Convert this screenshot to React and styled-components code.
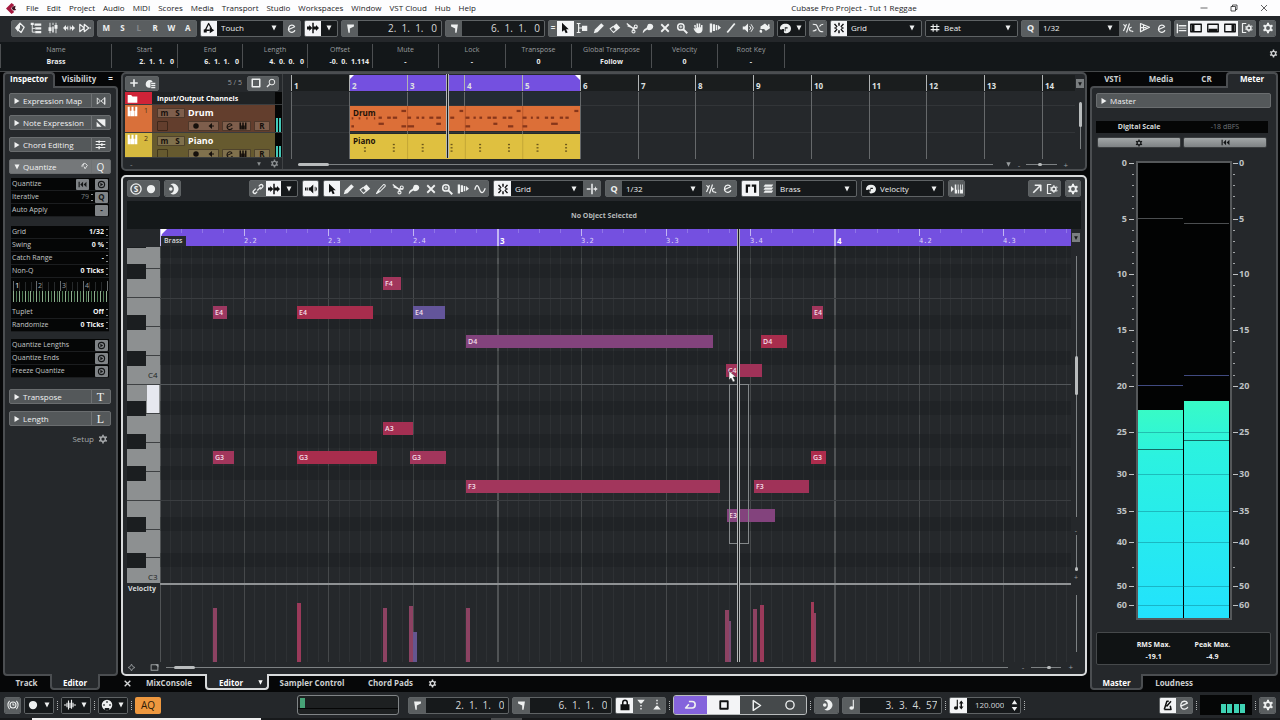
import React from "react";
import styled, { createGlobalStyle, css } from "styled-components";

const GlobalStyle = createGlobalStyle`
  *, *::before, *::after { box-sizing: border-box; }
  body { margin: 0; background: #060708; }
  body, button, input, select {
    font-family: "Open Sans", "Noto Sans", sans-serif;
    font-size: 8px;
    line-height: 10px;
    color: #d6d8d9;
  }
  button, input, select {
    margin: 0; padding: 0; border: 0; background: none; min-width: 0;
    appearance: none; border-radius: 0; outline: none;
  }
  h2, p, dl, dd, dt, ul { margin: 0; padding: 0; font-size: inherit; font-weight: inherit; }
`;

/* ---------- icons ---------- */

const line = (d, w = 1.6) => (
  <path d={d} fill="none" stroke="currentColor" strokeWidth={w} strokeLinejoin="round" />
);

const glyphs = {
  down: <path d="M3 3h10L8 13z" />,
  right: <path d="M3 2v12l10-6z" />,
  updown: <path d="M8 0l4 6H4zM8 16l4-6H4z" />,
  constrain: <>{line("M8 1.500 13.500 7 9.500 14 2.500 8z", 1.8)}<path d="M8 1.500 2 8l3 5 3-5z" /></>,
  tree: <><path d="M1 1h4v3H1zM6 2h9v3H6zM7 7h8v3H7zM7 12h8v3H7z" />{line("M3 3v10.500h4M3 8.500h4", 1.2)}</>,
  faders: <>{line("M4 1v14M8 1v3M12 1v14", 1.2)}<path d="M2 7h4v5H2zM10 4h4v5h-4zM7 6h2v8H7z" /></>,
  span: <path d="M0 8l4-4v3h2V5h1v6H6V9H4v3zM16 8l-4-4v3h-2V5H9v6h1V9h2v3z" />,
  skip: <>{line("M1 3l6 5-6 5zM7 3l6 5-6 5zM14 8h2", 1.5)}</>,
  touch: <>{line("M3 11 7.500 2l4 7M2 11h7", 1.7)}<path d="M9 7l6 4-6 4zM1 10h4v4H1z" /></>,
  edit: <>{line("M4 9.500 12.500 5.500C11 2 5.500 2 4 6.500S5.500 14 9 13.500 13 10.500 13 10.500", 1.8)}</>,
  autoscroll: <><path d="M7 1h2v14H7zM0 6h3V4l4 4-4 4v-2H0zM9 6h3V4l4 4-4 4v-2H9z" /></>,
  flagL: <path d="M3 2h10v3L7 8v6H5z" />,
  flagR: <path d="M13 2H3v3l6 3v6h2z" />,
  pointer: <path d="M4 1v12l3-2.500 2 4.500 2.500-1-2-4.500H13z" />,
  range: <>{line("M1 2h5M1 14h5M3.500 2v12M8 8h-4", 1.6)}<path d="M8 5h7v7H8z" /></>,
  pencil: <path d="M1 15l1.500-5L11 1.500 14.500 5 6 13.500z" />,
  eraser: <>{line("M5.500 6 1.500 9 6 14l4-3.500", 1.4)}<path d="M5 6l5-4 5 5.500-5 4z" /></>,
  scissors: <>{line("M1 2l8 6h6M2 5l7 3 2 4", 1.7)}<circle cx="13" cy="6" r="2" fill="none" stroke="currentColor" strokeWidth="1.500" /><circle cx="10" cy="12.500" r="2" fill="none" stroke="currentColor" strokeWidth="1.500" /></>,
  glue: <path d="M1 15c0-4 2-6 5-7l2-5c3-2 7 0 7 3 0 3-3 5-6 5l-2-1c-2 1-4 3-6 5z" />,
  cross: line("M3 3l10 10M13 3 3 13", 2.4),
  zoom: <><circle cx="6.500" cy="6.500" r="4.300" fill="none" stroke="currentColor" strokeWidth="2" />{line("M9.500 9.500 15 15", 2.6)}{line("M4.500 6.500h4M6.500 4.500v4", 1.2)}</>,
  search: <><circle cx="9.500" cy="6.500" r="4.500" fill="none" stroke="currentColor" strokeWidth="1.600" />{line("M6 10 1.500 14.500", 2)}</>,
  hand: <path d="M3 6V4h2v4h1V2h2v5h1V2h2v5h1V4h2v6c0 3-2 5-5 5-4 0-5-3-7-6l1-1 2 2z" />,
  comp: <path d="M1 2h3v12H1zM5 3h3v9H5zM9 4h2v7H9zM12 4l4 3.500-4 3z" />,
  line: line("M3 14 13 2", 2.4),
  speaker: <><path d="M1 6h3l4-4v12l-4-4H1z" />{line("M10 5.500l2 2.500-2 2.500M12 3l3 5-3 5", 1.3)}</>,
  bucket: <><path d="M2 6l6-4 7 6-6 4c-1-3-4-3-7-2z" /><path d="M1 11c2-1 4 0 3 3-2 1-4 0-3-3zM12 3h2v5h-2z" /></>,
  palette: <><path d="M8 1C3 1 0 4 0 8c0 2 2 2 3 1 2-1 4 0 3 2-1 2 0 4 2 4 5 0 8-3 8-7S13 1 8 1z" /><path d="M7 6h4v2H8v4H7z" fill="#1a1d1f" /></>,
  xfade: line("M1 3c5 0 5 0 7 5s3 5 7 5M1 12c3 0 4-1 5-2M10 6c1-2 3-3 5-3", 1.6),
  snap: <><path d="M7 1h2v4H7zM7 11h2v4H7z" />{line("M2 2.500 5.500 6.500M2 13.500 5.500 9.500M14 2.500 10.500 6.500M14 13.500 10.500 9.500", 2)}<path d="M2 7h3v2H2zM11 7h3v2h-3z" /></>,
  hash: line("M5 2v12M11 2v12M1 5.500h14M1 10.500h14", 1.8),
  iterate: <>{line("M2 3l3 4M6 3 2 12M10 2 6 14M13 7c-4 0-4 5 0 5M15 13l-2-1", 1.6)}</>,
  quantPanel: <>{line("M2 2l12 5-12 6zM2 7.500h8M6 4v8", 1.6)}</>,
  align: <path d="M1 1h2v14H1zM4 3h11v2H4zM4 7h11v1H4zM4 10h11v2H4z" />,
  zoneLeft: <>{line("M1 3h14v10H1z", 1.8)}<path d="M2 4h4v8H2z" /></>,
  zoneBottom: <>{line("M1 3h14v10H1z", 1.8)}<path d="M2 9h12v3H2z" /></>,
  zoneRight: <>{line("M1 3h14v10H1z", 1.8)}<path d="M10 4h4v8h-4z" /></>,
  setup: <>{line("M7 2H2v12h5", 1.6)}<circle cx="10.500" cy="8" r="2.800" fill="none" stroke="currentColor" strokeWidth="2" />{line("M10.500 3v2M10.500 11v2M14 6l1-1M14 10l1 1M6 6l1 1M6 10l1-1", 1.8)}</>,
  gear: (
    <>
      <circle cx="8" cy="8" r="3.800" fill="none" stroke="currentColor" strokeWidth="2.400" />
      {line("M8 1v3M8 12v3M2 4.500l2.500 1.500M14 11.500 11.500 10M2 11.500 4.500 10M14 4.500 11.500 6", 2.6)}
    </>
  ),
  plus: line("M8 2v12M2 8h12", 2.6),
  preset: <><path d="M1 9a6 6 0 0 1 6-6c3 0 4 2 4 3H8v8H6C3 14 1 12 1 9z" /><path d="M9 7h6v2H9zM9 10h6v2H9zM9 13h6v2H9z" /></>,
  frame: line("M2 2h12v12H2z", 2.4),
  folder: <path d="M1 3h5l2 2h7v9H1z" />,
  keys: <path d="M1 1h3v6h1.500v8H1zM6.500 1h3v6H11v8H5.800V7h.7zM12 1h3v14h-3.500V7h.5z" />,
  dot: <circle cx="8" cy="8" r="5.500" />,
  ring: <circle cx="8" cy="8" r="5.500" fill="none" stroke="currentColor" strokeWidth="1.800" />,
  monitor: <path d="M3 8l7-6v12zM11 6h2v4h-2z" />,
  link: line("M7 10 11.500 5.500M9 4.500l2-2c2-1.500 4.500 1 3 3l-3 3M7 11.500l-2 2c-2 1.500-4.500-1-3-3l3-3", 1.8),
  feedback: <><path d="M5 6h2l4-4v12l-4-4H5zM0 6h2v4H0zM3 6h1v4H3zM13 5h1v6h-1zM15 6h1v4h-1z" /></>,
  trim: <>{line("M2 14 5 9l6.500-7c2 0 2.500 1 2 2.500L7 11z", 1.4)}<path d="M1 15l4-6 2 2z" /></>,
  wave: line("M1 9c2-7 4-7 6-1s5 7 8-1", 1.7),
  vsplit: <path d="M7 1h2v14H7zM1 7h5v2H1zM10 7h5v2h-5zM12 5h1v6h-1z" />,
  parts: <path d="M1 2h6v3H4v8H1zM15 2H9v3h3v8h3z" />,
  layers: <path d="M4 2h11l-2 3H2zM4 6h11l-2 3H2zM4 10h11l-2 3H2z" />,
  midiIn: <path d="M0 4l4 4-4 4zM5 2h2v7h1v5H5zM9 2h1v7h1v5H9zM12 2h1v7h2V2h1v12h-4z" />,
  open: <>{line("M3 13 12 4M5 3h8v8", 2.2)}</>,
  solo: (
    <>
      <circle cx="8" cy="8" r="6.800" fill="none" stroke="currentColor" strokeWidth="1.800" />
      <text x="8" y="12" fontSize="11" fontWeight="700" textAnchor="middle">S</text>
    </>
  ),
  moon: <><path d="M4.500 2A7 7 0 1 1 4.500 14 6.200 6.200 0 0 0 4.500 2z" /><circle cx="5" cy="8" r="2.400" /></>,
  clock: <><circle cx="8" cy="8" r="4" fill="none" stroke="currentColor" strokeWidth="1.500" />{line("M8 5.500V8h2M3.500 2.500c-3 3-3 8 0 11M12.500 2.500c3 3 3 8 0 11", 1.4)}</>,
  audio: line("M0 8h3M4 5v6M6 2v12M8 5v7M10 1v12M12 5v6M13 8h3", 1.5),
  midi: <><circle cx="8" cy="8" r="7" /><path d="M5 12h6v3H5zM3 7h2v2H3zM11 7h2v2h-2zM7 3h2v2H7z" fill="#1a1d1f" /></>,
  lock: <><path d="M2 7h12v8H2z" />{line("M5 8V4.500c0-4 6-4 6 0V8", 2)}</>,
  punchIn: <><path d="M3 1h10L9 6H7zM7 8h2v2H7zM7 12h2v2H7z" /></>,
  punchOut: <><path d="M3 14h10L9 9H7zM7 5h2v2H7zM7 1h2v2H7z" /></>,
  cycle: line("M6 3h4c5 0 5 8 0 8H2l4-4.500", 2),
  stop: line("M3 3h10v10H3z", 2.4),
  play: line("M4 2v12l9-6z", 1.8),
  note: <><path d="M9 1h1.500v11H9z" /><ellipse cx="7.500" cy="12" rx="3" ry="2.200" /></>,
  tempo: <><path d="M5 1h1.500v11H5z" /><ellipse cx="4" cy="12" rx="2.800" ry="2.200" /><path d="M11 2l3 4h-2v4h2l-3 4-3-4h2V6H8z" /></>,
  metronome: <>{line("M3 14 6.500 3H9M3 14h9l-1-5M6 10l6-7", 2)}</>,
  rewind: <path d="M1 3h2v10H1zM9 3v10L4 8zM15 3v10l-5-5z" />,
  exprMap: line("M2 3v10l5-5zM8 8l6-5v10l-6-5M14 2v12", 1.4),
  noteExpr: <path d="M1 2h14v12l-4-3-6-5zM1 6l8 8H1z" />,
  chordEdit: <><path d="M1 3h14v1.500H1zM1 7.300h14v1.500H1zM1 11.500h14V13H1zM5 2h2v4H5zM9 6h2v4H9zM5 10h2v5H5z" /></>,
  reset: line("M4 9C2 5 7 1 10 3l3 3-4 6-2-4M7 3 5 7", 1.5),
  runRing: <><circle cx="8" cy="8" r="5.500" fill="none" stroke="currentColor" strokeWidth="2" /><path d="M6 5v6l5-3z" /></>,
  cornerSq: <>{line("M2 3h12v10H2z", 1.8)}<path d="M9 2h6v6z" /></>,
  diamond: line("M8 2l2 4 4 2-4 2-2 4-2-4-4-2 4-2z", 1.6),
  minimize: line("M1 8h14", 1.3),
  restore: line("M2 5h9v9H2zM5 5V2h9v9h-3", 1.5),
  close: line("M2 2l12 12M14 2 2 14", 1.4),
  logo: <><path d="M0 8 8 0l4 3-5 5 5 5-4 3z" fill="#a5193f" /><path d="M10 5l4-1-1 4 2 2-4 1-3-3z" fill="#3c1422" /></>,
};

const Svg = styled.svg`
  display: block;
  flex: none;
  fill: currentColor;
`;
const Icon = ({ name, size = 12 }) => (
  <Svg viewBox="0 0 16 16" width={size} height={size} aria-hidden="true">{glyphs[name]}</Svg>
);

/* ---------- shared controls ---------- */

const Group = styled.div`
  display: flex;
  flex: none;
  width: ${(p) => p.$w}px;
  height: ${(p) => p.$h || 17}px;
  margin-left: ${(p) => (p.$end ? "auto" : (p.$ml || 0) + "px")};
  border: 1px solid #5f6365;
  border-radius: 2px;
  overflow: hidden;
  background: ${(p) => (p.$dark ? "#16191b" : "#5a5e60")};
`;

const ToolButton = styled.button`
  display: flex;
  flex: ${(p) => (p.$w ? "none" : "1")};
  width: ${(p) => (p.$w ? p.$w + "px" : "auto")};
  align-items: center;
  justify-content: center;
  font-size: ${(p) => p.$fs || 8}px;
  font-weight: 700;
  background: ${(p) => (p.$on ? "#f3f4f6" : p.$field ? "#16191b" : p.$fill || "#5a5e60")};
  color: ${(p) => (p.$on ? "#101112" : p.$dim ? "#85898b" : "#eef0f0")};
`;

const SelectWrap = styled.label`
  display: flex;
  flex: 1;
  min-width: 0;
  align-items: center;
  gap: 4px;
  padding: 0 5px 0 4px;
  background: #16191b;
  color: #eef0f0;
  select { flex: 1; color: #eef0f0; }
`;
const Picker = ({ label, value, icon }) => (
  <SelectWrap>
    {icon && <Icon name={icon} size={10} />}
    <select aria-label={label} defaultValue={value}><option>{value}</option></select>
    <Icon name="down" size={8} />
  </SelectWrap>
);

const PositionInput = styled.input`
  flex: 1;
  width: 20px;
  padding-right: 4px;
  background: #16191b;
  text-align: right;
  font-size: 10px;
  white-space: pre;
  color: #d6d8d9;
`;
const TempoInput = styled(PositionInput)`
  font-size: 8px;
`;

const Tools = ({ items }) =>
  items.map(([name, label, on]) => (
    <ToolButton key={label} aria-label={label} $on={on}><Icon name={name} size={12} /></ToolButton>
  ));

/* ---------- menu bar ---------- */

const MenuBar = styled.header`
  display: flex;
  align-items: center;
  height: 16px;
  padding: 0 12px 0 6px;
  background: #fdfdfe;
  color: #1c1c1e;
`;
const MenuList = styled.nav`
  display: flex;
  gap: 8px;
  margin-left: 9px;
`;
const MenuItem = styled.button`
  color: #1c1c1e;
`;
const WindowTitle = styled.div`
  flex: 1;
  padding-left: 32px;
  text-align: center;
`;
const WindowControls = styled.div`
  display: flex;
  gap: 22px;
  button { color: #1c1c1e; }
`;

const menus = ["File", "Edit", "Project", "Audio", "MIDI", "Scores", "Media", "Transport", "Studio", "Workspaces", "Window", "VST Cloud", "Hub", "Help"];

/* ---------- project toolbar and info line ---------- */

const Toolbar = styled.div`
  display: flex;
  align-items: center;
  gap: 3px;
  height: 26px;
  padding: 0 4px 2px 11px;
  background: #24272a;
`;
const InfoLine = styled.div`
  display: flex;
  height: 30px;
  padding: 2px 2px 0 0;
  background: #131719;
  border-bottom: 1px solid #45484a;
`;
const InfoCell = styled.div`
  width: ${(p) => p.$w}px;
  flex: none;
  height: 24px;
  border-left: 1px solid #4c4f51;
  text-align: center;
`;
const InfoLabel = styled.div`
  height: 12px;
  line-height: 11px;
  font-size: 7px;
  color: #999d9f;
`;
const InfoValue = styled.div`
  font-size: 7px;
  line-height: 12px;
  font-weight: 700;
  color: #eceeee;
  white-space: pre;
  ${(p) => p.$right && css`text-align: right; padding-right: 3px;`}
`;
const InfoSetup = styled.button`
  margin-left: auto;
  padding-bottom: 8px;
  color: #cfd1d2;
`;

const infoCells = [
  ["Name", "Brass", 111], ["Start", "2.  1.  1.   0", 66, 1], ["End", "6.  1.  1.   0", 65, 1],
  ["Length", "4.  0.  0.   0", 65, 1], ["Offset", "-0.  0.  1.114", 65, 1], ["Mute", "-", 66],
  ["Lock", "-", 67], ["Transpose", "0", 66], ["Global Transpose", "Follow", 80], ["Velocity", "0", 66], ["Root Key", "-", 67],
];

/* ---------- zone panels with tabs ---------- */

const Workspace = styled.main`
  display: grid;
  grid-template-columns: 115px minmax(0, 1fr) 188px;
  gap: 3px;
  padding: 0 2px 2px 3px;
  background: #060708;
`;
const Column = styled.section`
  display: flex;
  flex-direction: column;
  min-width: 0;
`;
const TabRow = styled.div`
  display: flex;
  align-items: center;
  height: 14px;
`;
const Tab = styled.button`
  height: 14px;
  width: ${(p) => p.$w}px;
  flex: none;
  font-weight: 700;
  color: ${(p) => (p.$active ? "#fff" : "#cdd0d1")};
  ${(p) => p.$active && css`
    position: relative;
    height: 16px;
    background: #25282b;
    border: 2px solid ${p.$bright ? "#d8dadb" : "#4b4e51"};
    ${p.$bottom
      ? css`border-top: 0; padding-top: 4px; margin-top: -2px; align-self: flex-start; border-radius: 0 0 4px 4px;`
      : css`border-bottom: 0; padding-bottom: 4px; margin-bottom: -2px; align-self: flex-start; border-radius: 4px 4px 0 0;`}
  `}
`;
const PanelBody = styled.div`
  flex: 1;
  display: flex;
  flex-direction: column;
  min-height: 0;
  border: 2px solid #4b4e51;
  border-radius: ${(p) => p.$radius || "4px"};
  background: #25282b;
  padding: ${(p) => p.$pad || "0"};
`;

/* ---------- inspector ---------- */

const SectionHeader = styled.button`
  display: flex;
  flex: none;
  align-items: center;
  gap: 2px;
  width: 100%;
  height: 15px;
  margin-bottom: ${(p) => p.$mb ?? 7}px;
  padding: 0 3px 0 3px;
  border: 1px solid #6a6d6f;
  border-radius: 2px;
  background: ${(p) => (p.$open ? "#75787a" : "#54585a")};
  color: #f0f1f1;
  text-align: left;
  span { flex: 1; }
`;
const HeaderIcon = styled.i`
  display: flex;
  align-items: center;
  justify-content: center;
  width: 16px;
  height: 13px;
  padding-left: 2px;
  border-left: 1px solid #6f7274;
  font-style: normal;
  font-size: ${(p) => (p.$serif ? 12 : 10)}px;
  font-family: ${(p) => (p.$serif ? '"Liberation Serif", serif' : "inherit")};
`;
const ParamBox = styled.div`
  flex: none;
  margin: 0 2px ${(p) => p.$mb}px;
  background: #050606;
`;
const ParamRow = styled.label`
  display: flex;
  align-items: center;
  gap: 2px;
  height: 13px;
  padding: 0 1px;
  border-bottom: 1px solid #1b1d1f;
  font-size: 7px;
  color: #c3c6c7;
  span { flex: 1; white-space: nowrap; }
`;
const ParamValue = styled.input`
  width: 34px;
  font-size: 7px;
  font-weight: ${(p) => (p.$dim ? 400 : 700)};
  text-align: right;
  color: ${(p) => (p.$dim ? "#7e8284" : "#f0f1f1")};
`;
const Spin = styled.i`
  width: 2px;
  height: 7px;
  border: solid #8b8f91;
  border-width: 1px 0;
`;
const MiniButton = styled.button`
  display: flex;
  align-items: center;
  justify-content: center;
  width: 13px;
  height: 11px;
  border-radius: 1px;
  background: #808487;
  color: #131516;
  font-weight: 700;
`;
const SetupRow = styled.div`
  display: flex;
  justify-content: flex-end;
  margin-top: 1px;
  padding-right: 3px;
  button { display: flex; align-items: center; gap: 4px; color: #a5a8aa; }
`;

const QuantizeGrid = () => (
  <Svg width="98" height="28" aria-hidden="true">
    {Array.from({ length: 17 }, (_, i) => (
      <rect key={i} x={2 + Math.round(i * 5.85)} y={i % 4 ? 4 : 3} width="1" height="10" fill={i % 4 ? "#26292b" : "#676b6d"} />
    ))}
    {Array.from({ length: 33 }, (_, i) => (
      <rect key={i} x={2 + Math.round(i * 2.9)} y="13" width="1" height="11" fill={i % 2 ? "#4e7a54" : "#8fae8f"} />
    ))}
    {["1", "2", "3", "4"].map((n, i) => (
      <text key={n} x={4 + Math.round(i * 23.4)} y="10" fontSize={i ? 7 : 8} fill={i ? "#9da1a3" : "#e6e8e8"}>{n}</text>
    ))}
  </Svg>
);

const Param = ({ label, value, dim, spin = true, children }) => (
  <ParamRow>
    <span>{label}</span>
    {value !== undefined && <ParamValue aria-label={label} defaultValue={value} $dim={dim} />}
    {spin && <Spin />}
    {children}
  </ParamRow>
);

const Inspector = () => (
  <Column>
    <TabRow>
      <Tab $w={52} $active>Inspector</Tab>
      <Tab $w={48}>Visibility</Tab>
      <ToolButton aria-label="Zone menu" $fill="transparent">=</ToolButton>
    </TabRow>
    <PanelBody $radius="0 4px 4px 4px" $pad="5px 5px 5px 4px">
      <SectionHeader><Icon name="right" size={8} /><span>Expression Map</span><HeaderIcon><Icon name="exprMap" size={10} /></HeaderIcon></SectionHeader>
      <SectionHeader><Icon name="right" size={8} /><span>Note Expression</span><HeaderIcon><Icon name="noteExpr" size={10} /></HeaderIcon></SectionHeader>
      <SectionHeader><Icon name="right" size={8} /><span>Chord Editing</span><HeaderIcon><Icon name="chordEdit" size={11} /></HeaderIcon></SectionHeader>
      <SectionHeader $open $mb={4}><Icon name="down" size={8} /><span>Quantize</span><Icon name="reset" size={9} /><HeaderIcon>Q</HeaderIcon></SectionHeader>
      <ParamBox $mb={9}>
        <Param label="Quantize" spin={false}>
          <MiniButton aria-label="Reset quantize"><Icon name="rewind" size={9} /></MiniButton>
          <i />
          <i />
          <MiniButton aria-label="Apply quantize"><Icon name="runRing" size={9} /></MiniButton>
        </Param>
        <Param label="Iterative" value="79" dim><MiniButton aria-label="Iterative quantize">Q</MiniButton></Param>
        <Param label="Auto Apply" spin={false}><MiniButton aria-label="Auto apply">-</MiniButton></Param>
      </ParamBox>
      <ParamBox $mb={7}>
        <Param label="Grid" value="1/32" />
        <Param label="Swing" value="0 %" />
        <Param label="Catch Range" value="-" />
        <Param label="Non-Q" value="0 Ticks" />
        <QuantizeGrid />
        <Param label="Tuplet" value="Off" />
        <Param label="Randomize" value="0 Ticks" />
      </ParamBox>
      <ParamBox $mb={11}>
        {["Quantize Lengths", "Quantize Ends", "Freeze Quantize"].map((l) => (
          <Param key={l} label={l} spin={false}><MiniButton aria-label={l}><Icon name="runRing" size={9} /></MiniButton></Param>
        ))}
      </ParamBox>
      <SectionHeader><Icon name="right" size={8} /><span>Transpose</span><HeaderIcon $serif>T</HeaderIcon></SectionHeader>
      <SectionHeader><Icon name="right" size={8} /><span>Length</span><HeaderIcon $serif>L</HeaderIcon></SectionHeader>
      <SetupRow><button>Setup <Icon name="gear" size={10} /></button></SetupRow>
    </PanelBody>
    <TabRow>
      <Tab $w={47}>Track</Tab>
      <Tab $w={50} $active $bottom>Editor</Tab>
    </TabRow>
  </Column>
);

/* ---------- project window ---------- */

const ProjectPanel = styled.div`
  display: flex;
  flex: none;
  height: 99px;
  padding-left: 2px;
  border: 2px solid #4b4e51;
  border-radius: 5px;
  background: #25282b;
`;
const TrackList = styled.div`
  width: 158px;
  flex: none;
  border-right: 1px solid #3f4244;
`;
const TrackListHeader = styled.div`
  display: flex;
  align-items: center;
  height: 18px;
  padding-right: 3px;
`;
const TrackCount = styled.span`
  flex: 1;
  padding-right: 5px;
  text-align: right;
  font-size: 7px;
  color: #9a9ea0;
`;
const TrackRow = styled.div`
  display: flex;
  height: ${(p) => p.$h}px;
  overflow: hidden;
  border-bottom: 1px solid #3a3d3f;
  background: ${(p) => p.$bg};
  color: #fff;
  font-weight: 700;
  font-size: 7px;
`;
const TrackIcon = styled.div`
  display: flex;
  justify-content: space-between;
  flex: none;
  width: 27px;
  padding: 1px 4px 0 2px;
  background: ${(p) => p.$bg};
  font-size: 7px;
  font-weight: 400;
  em { font-style: normal; color: #4c3218; }
`;
const TrackMain = styled.div`
  flex: 1;
  padding: 2px 5px 0 5px;
`;
const TrackLine = styled.div`
  display: flex;
  align-items: center;
  gap: 3px;
  height: 12px;
  margin-bottom: 1px;
  font-size: 9px;
  white-space: nowrap;
`;
const TrackButtons = styled.div`
  display: flex;
  flex: none;
  width: ${(p) => p.$w}px;
  height: 10px;
  margin-left: ${(p) => p.$ml || 0}px;
  border: 1px solid rgba(20, 10, 5, 0.45);
  border-radius: 1px;
  background: ${(p) => (p.$empty ? "transparent" : "rgba(190, 170, 150, 0.3)")};
  button {
    display: flex; flex: 1; align-items: center; justify-content: center;
    font-size: 8px; line-height: 8px; font-weight: 700; color: #16100c;
  }
`;
const TrackMeter = styled.div`
  display: flex;
  align-items: flex-end;
  gap: 1px;
  flex: none;
  width: 7px;
  padding-left: 1px;
  background: #050606;
  i { width: 2px; height: ${(p) => p.$level}px; background: #43c9b8; }
`;
const ListFooter = styled.div`
  display: flex;
  align-items: center;
  gap: 8px;
  height: 11px;
  padding: 0 3px 0 5px;
  color: #8b8f91;
  span { flex: 1; }
`;

const Track = ({ h, n, name, cell, body, level }) => (
  <TrackRow $h={h} $bg={body}>
    <TrackIcon $bg={cell}><Icon name="keys" size={11} /><em>{n}</em></TrackIcon>
    <TrackMain>
      <TrackLine>
        <TrackButtons $w={28}>
          <button aria-label={"Mute " + name}>m</button><button aria-label={"Solo " + name}>S</button>
        </TrackButtons>
        {name}
      </TrackLine>
      <TrackLine>
        <TrackButtons $w={11} $empty />
        <TrackButtons $w={31} $ml={17}>
          <button aria-label={"Record " + name}><Icon name="dot" size={8} /></button>
          <button aria-label={"Monitor " + name}><Icon name="monitor" size={8} /></button>
        </TrackButtons>
        <TrackButtons $w={29}>
          <button aria-label={"Edit " + name}><Icon name="edit" size={9} /></button>
          <button aria-label={"Instrument " + name}><Icon name="keys" size={8} /></button>
        </TrackButtons>
        <TrackButtons $w={16}><button aria-label={"Read automation " + name}>R</button></TrackButtons>
      </TrackLine>
    </TrackMain>
    <TrackMeter $level={level}><i /><i /></TrackMeter>
  </TrackRow>
);

const Timeline = styled.div`
  position: relative;
  flex: 1;
  min-width: 0;
  margin-left: 8px;
  overflow: hidden;
`;
const Ruler = styled.div`
  position: relative;
  height: 16px;
  margin: 1px 0;
  background: #1a1d1e;
`;
const CycleRange = styled.div`
  position: absolute;
  left: ${(p) => p.$x}px;
  width: ${(p) => p.$w}px;
  top: 0;
  bottom: 0;
  background: #7450e0;
  &::before, &::after {
    content: "";
    position: absolute;
    top: 0;
    border: 5px solid transparent;
    border-top: 5px solid #fff;
  }
  &::before { left: 0; border-left: 0; }
  &::after { right: 0; border-right: 0; }
`;
const BarLabel = styled.span`
  position: absolute;
  left: ${(p) => p.$x}px;
  bottom: 0;
  font-size: 8px;
  font-weight: 700;
  color: #dfe1e2;
`;
const Lanes = styled.div`
  position: relative;
  height: 67px;
`;
const GridSvg = styled.svg`
  position: absolute;
  inset: 0;
  display: block;
  width: 100%;
  height: 100%;
`;
const Clip = styled.div`
  position: absolute;
  left: 59px;
  top: ${(p) => p.$y}px;
  width: 230px;
  height: 25px;
  padding: 2px 3px;
  background: ${(p) => p.$bg};
  color: #1d1208;
  font-weight: 700;
  span { position: relative; }
`;
const Playhead = styled.div`
  position: absolute;
  left: ${(p) => p.$x}px;
  top: 0;
  bottom: ${(p) => p.$bottom || 0}px;
  width: 3px;
  border: solid #b4b7b8;
  border-width: 0 1px;
  background: #1a1c1e;
`;
const HScroll = styled.div`
  position: relative;
  flex: ${(p) => (p.$w ? "none" : "1")};
  width: ${(p) => (p.$w ? p.$w + "px" : "auto")};
  height: 1px;
  background: #7d8183;
  &::before {
    content: "";
    position: absolute;
    left: ${(p) => p.$thumbX}px;
    top: -1px;
    width: ${(p) => p.$thumbW}px;
    height: 3px;
    border-radius: 2px;
    background: #b9bcbd;
  }
`;
const VScroll = styled.div`
  position: relative;
  width: 1px;
  height: ${(p) => p.$h}px;
  margin: ${(p) => p.$mt}px auto 0;
  background: #7d8183;
  &::before {
    content: "";
    position: absolute;
    left: -1px;
    top: ${(p) => p.$thumbY || 0}px;
    width: 3px;
    height: ${(p) => p.$thumbH || 0}px;
    border-radius: 2px;
    background: #b9bcbd;
  }
`;
const ZoomMark = styled.div`
  height: 6px;
  margin-top: ${(p) => p.$mt}px;
  line-height: 6px;
  font-size: 7px;
  text-align: center;
  color: #9a9ea0;
`;
const TimelineFooter = styled.div`
  display: flex;
  align-items: center;
  gap: 6px;
  height: 11px;
  padding: 0 7px;
  color: #9a9ea0;
`;
const ScrollColumn = styled.div`
  width: 10px;
  flex: none;
  padding-top: ${(p) => p.$pt || 0}px;
`;
const RulerMenu = styled.button`
  display: flex;
  align-items: center;
  justify-content: center;
  width: 8px;
  height: 9px;
  margin: 0 auto;
  background: #7a7e80;
  color: #17191a;
`;

const barX = (n) => Math.round((n - 1) * 57.75);
const drumHits = [
  [213, 143, 5], [234, 143, 5], [257, 143, 4], [280, 143, 4], [294, 141, 10], [320, 141, 11], [337, 141, 13], [363, 120, 14], [294, 160, 16], [212, 168, 8], [363, 168, 14],
  [381, 141, 11], [408, 141, 8], [424, 141, 8], [447, 141, 12], [468, 141, 14], [381, 168, 20], [468, 160, 14], [510, 141, 12], [538, 120, 11],
  [556, 141, 12], [580, 141, 7], [598, 141, 8], [622, 141, 11], [638, 141, 12], [668, 141, 11], [685, 141, 12], [710, 120, 12], [640, 160, 12], [556, 168, 14], [684, 168, 16],
  [728, 141, 12], [753, 141, 6], [770, 141, 8], [795, 141, 10], [813, 141, 10], [840, 141, 10], [857, 141, 10], [884, 120, 12], [814, 160, 20], [728, 168, 14],
];
const pianoHits = [253, 340, 427, 514, 600, 687, 773, 859];

const Project = () => (
  <ProjectPanel>
    <TrackList>
      <TrackListHeader>
        <Group $w={34} $h={15}>
          <ToolButton aria-label="Add track"><Icon name="plus" size={10} /></ToolButton>
          <ToolButton aria-label="Track preset"><Icon name="preset" size={11} /></ToolButton>
        </Group>
        <TrackCount>5 / 5</TrackCount>
        <Group $w={32} $h={15}>
          <ToolButton aria-label="Visibility agent"><Icon name="frame" size={10} /></ToolButton>
          <ToolButton aria-label="Find tracks"><Icon name="search" size={10} /></ToolButton>
        </Group>
      </TrackListHeader>
      <TrackRow $h={13} $bg="#1f2224">
        <TrackIcon $bg="#cf2338"><Icon name="folder" size={11} /></TrackIcon>
        <TrackMain>Input/Output Channels</TrackMain>
        <TrackMeter $level={0} />
      </TrackRow>
      <Track h={28} n="1" name="Drum" cell="#d9703a" body="#633e2d" level={14} />
      <Track h={25} n="2" name="Piano" cell="#d6b93f" body="#665a2f" level={11} />
      <ListFooter><span>-</span><Icon name="down" size={6} /><Icon name="gear" size={9} /></ListFooter>
    </TrackList>
    <Timeline>
      <Ruler>
        <CycleRange $x={58} $w={231} />
        <GridSvg aria-hidden="true">
          {Array.from({ length: 30 }, (_, i) => <rect key={i} x={barX(i + 1)} y="0" width="1" height="16" fill="#b0b3b4" />)}
        </GridSvg>
        {Array.from({ length: 14 }, (_, i) => <BarLabel key={i} $x={barX(i + 1) + 3}>{i + 1}</BarLabel>)}
      </Ruler>
      <Lanes>
        <GridSvg aria-hidden="true">
          <rect x="58" y="0" width="231" height="13" fill="#232c34" />
          <rect x="0" y="13" width="100%" height="1" fill="#323538" />
          <rect x="0" y="40" width="100%" height="1" fill="#323538" />
          {Array.from({ length: 30 }, (_, i) => <rect key={i} x={barX(i + 1)} y="0" width="1" height="67" fill="#66696b" />)}
        </GridSvg>
        <Clip $y={14} $bg="#dc6f38">
          <GridSvg viewBox="208 108 693 78" preserveAspectRatio="none" aria-hidden="true">
            {[380, 554, 727].map((x) => <rect key={x} x={x} y="108" width="3" height="78" fill="#bb582a" />)}
            {drumHits.map(([x, y, w], i) => <rect key={i} x={x} y={y} width={w} height="7" fill="#87361a" />)}
          </GridSvg>
          <span>Drum</span>
        </Clip>
        <Clip $y={42} $bg="#dfc040">
          <GridSvg viewBox="208 192 693 76" preserveAspectRatio="none" aria-hidden="true">
            {[380, 554, 727].map((x) => <rect key={x} x={x} y="192" width="3" height="76" fill="#c3a636" />)}
            {pianoHits.flatMap((x, i) => (i ? [222, 232, 242] : [232, 242]).map((y) => <rect key={x + "-" + y} x={x - 3} y={y} width="6" height="4" fill="#6b561a" />))}
          </GridSvg>
          <span>Piano</span>
        </Clip>
      </Lanes>
      <Playhead $x={155} $bottom={11} />
      <TimelineFooter>
        <HScroll $thumbX={0} $thumbW={31} />
        <i />
        <Icon name="down" size={7} />
        <span>-</span>
        <HScroll $w={31} $thumbX={12} $thumbW={4} />
        <span>+</span>
      </TimelineFooter>
    </Timeline>
    <ScrollColumn $pt={5}>
      <RulerMenu aria-label="Ruler display"><Icon name="down" size={6} /></RulerMenu>
      <VScroll $mt={14} $h={47} $thumbH={25} />
    </ScrollColumn>
  </ProjectPanel>
);

/* ---------- key editor ---------- */

const EditorPanel = styled.div`
  display: flex;
  flex: 1;
  flex-direction: column;
  margin-top: 4px;
  padding: 3px 4px 0;
  border: 2px solid #d8dadb;
  border-radius: 5px;
  background: #25282b;
`;
const EditorTools = styled.div`
  display: flex;
  gap: 4px;
  height: 21px;
`;
const Spacer = styled.div`
  flex: ${(p) => p.$grow || 1};
`;
const EditorInfo = styled.div`
  height: 28px;
  line-height: 29px;
  text-align: center;
  font-size: 7px;
  font-weight: 700;
  background: #141819;
  color: #b4b8b9;
`;
const EditorBody = styled.div`
  display: flex;
  flex: 1;
  min-height: 433px;
`;
const KeyColumn = styled.div`
  display: flex;
  flex-direction: column;
  width: 33px;
  flex: none;
  padding-top: 18px;
`;
const KeySvg = styled.svg`
  display: block;
  flex: 1;
  width: 33px;
  min-height: 0;
`;
const LaneName = styled.div`
  height: 79px;
  padding: 1px 0 0 1px;
  font-size: 7px;
  font-weight: 700;
`;
const CanvasColumn = styled.div`
  position: relative;
  display: flex;
  flex: 1;
  flex-direction: column;
  min-width: 0;
  overflow: hidden;
`;
const EditorRuler = styled.div`
  position: relative;
  height: 17px;
  background: #7450e0;
`;
const RulerLabel = styled.span`
  position: absolute;
  left: ${(p) => p.$x}px;
  bottom: 0;
  font-size: ${(p) => (p.$major ? 8 : 7)}px;
  font-weight: ${(p) => (p.$major ? 700 : 400)};
  font-family: ${(p) => (p.$major ? "inherit" : '"DejaVu Sans Mono", monospace')};
  color: ${(p) => (p.$major ? "#fff" : "#ddd6f7")};
`;
const PartName = styled.span`
  position: absolute;
  left: 1px;
  bottom: 0;
  padding: 0 3px;
  font-size: 7px;
  font-weight: 600;
  background: #26292c;
`;
const NoteArea = styled.div`
  position: relative;
  flex: 1;
  overflow: hidden;
`;
const VelocityLane = styled.div`
  position: relative;
  height: 79px;
  border-top: 2px solid #8f9294;
`;
const Note = styled.div`
  position: absolute;
  left: ${(p) => p.$x}px;
  top: ${(p) => p.$y}px;
  width: ${(p) => p.$w}px;
  height: 13px;
  padding-left: 2px;
  line-height: 13px;
  font-size: 7px;
  font-weight: 600;
  background: ${(p) => p.$c};
  color: #f3dfe8;
`;
const Marquee = styled.div`
  position: absolute;
  left: 569px;
  top: 138px;
  width: 20px;
  height: 160px;
  border: 1px solid #84888a;
`;
const Cursor = styled.svg`
  position: absolute;
  left: 568px;
  top: 141px;
  display: block;
`;
const EditorFooter = styled.div`
  display: flex;
  align-items: center;
  gap: 7px;
  height: 12px;
  padding: 0 8px 2px 0;
  color: #9a9ea0;
`;

const RED = "#a42f52";
const notes = [
  ["F4", 223, 31, 18, "#a2365c"], ["E4", 53, 60, 14, "#9d3861"], ["E4", 137, 60, 76, "#a82d4d"], ["E4", 253, 60, 32, "#63559a"],
  ["D4", 306, 89, 247, "#83437d"], ["D4", 601, 89, 26, "#a82d4d"], ["E4", 652, 60, 11, "#a2365c"], ["C4", 566, 118, 36, "#a03258"],
  ["A3", 223, 176, 30, RED], ["G3", 53, 205, 21, "#a2365c"], ["G3", 137, 205, 80, "#a82d4d"], ["G3", 250, 205, 36, "#a2365c"],
  ["G3", 651, 205, 15, "#ad2c4c"], ["F3", 306, 234, 254, "#a2365c"], ["F3", 594, 234, 55, "#a03258"], ["E3", 567, 263, 48, "#83437d"],
];
const velocities = [
  [53, 54, 4, "#8c4262"], [137, 59, 4, "#9a3a5a"], [223, 54, 4, "#8c4262"], [249, 56, 4, "#8c4262"], [253, 30, 4, "#65568f"], [306, 54, 4, "#8c4262"],
  [565, 52, 4, "#8c4262"], [569, 41, 2, "#7b4c74"], [593, 53, 4, "#8c4262"], [600, 57, 4, "#9a3a5a"], [651, 60, 3, "#a03b58"], [654, 49, 2, "#8c4262"],
];
const blackKeys = [-2, 18, 69, 105, 155, 188, 220, 271, 307];
const whiteLines = [22, 51, 80, 109, 138, 167, 196, 225, 254, 283, 311];
const beatX = (i) => Math.floor(i * 84.35);
const beatLabels = ["", "2.2", "2.3", "2.4", "3", "3.2", "3.3", "3.4", "4", "4.2", "4.3"];

const Keyboard = () => (
  <KeySvg aria-label="Piano keyboard">
    <rect width="33" height="100%" fill="#8d9091" />
    {whiteLines.map((y) => <rect key={y} y={y - 1} width="33" height="1" fill="#3e4143" />)}
    {blackKeys.map((y) => <rect key={y} y={Math.max(y - 1, 0)} width="19" height={y < 0 ? 1 : 15} fill="#1b1e20" />)}
    <rect x="20" y="138" width="12" height="28" fill="#e6e8ef" />
    <text x="21" y="131" fontSize="8" fill="#1c1f21">C4</text>
    <text x="21" y="333" fontSize="8" fill="#1c1f21">C3</text>
  </KeySvg>
);

const GridLines = () =>
  Array.from({ length: 240 }, (_, i) => {
    const beat = i % 8 === 0;
    const bar = i % 32 === 0;
    return <rect key={i} x={Math.floor(i * 10.544)} y="0" width={bar && i ? 2 : 1} height="100%" fill={bar ? "#505355" : beat ? "#46494b" : "#2e3134"} />;
  });

const KeyEditor = () => (
  <EditorPanel>
    <EditorTools>
      <Group $w={33}><Tools items={[["solo", "Solo editor"], ["dot", "Record in editor"]]} /></Group>
      <Group $w={17}><Tools items={[["moon", "Retrospective record"]]} /></Group>
      <Group $w={49} $ml={64}>
        <Tools items={[["link", "Link editors"], ["autoscroll", "Auto scroll", 1]]} />
        <ToolButton aria-label="Scroll options" $field><Icon name="down" size={8} /></ToolButton>
      </Group>
      <Group $w={17}><Tools items={[["feedback", "Acoustic feedback", 1]]} /></Group>
      <Group $w={166}>
        <Tools items={[["pointer", "Select", 1], ["pencil", "Draw"], ["eraser", "Erase"], ["trim", "Trim"], ["scissors", "Split"], ["glue", "Glue"], ["cross", "Mute"], ["zoom", "Zoom"], ["comp", "Time warp"], ["wave", "Line"]]} />
      </Group>
      <Group $w={108}>
        <ToolButton $w={17} $on aria-label="Snap"><Icon name="snap" /></ToolButton>
        <Picker label="Snap type" value="Grid" />
        <ToolButton $w={17} aria-label="Relative snap"><Icon name="vsplit" /></ToolButton>
      </Group>
      <Group $w={132}>
        <ToolButton $w={16} $fs={9} aria-label="Apply quantize">Q</ToolButton>
        <Picker label="Quantize preset" value="1/32" />
        <ToolButton $w={17} aria-label="Iterative"><Icon name="iterate" /></ToolButton>
        <ToolButton $w={17} aria-label="Open quantize panel"><Icon name="edit" size={11} /></ToolButton>
      </Group>
      <Group $w={116}>
        <ToolButton $w={17} $on aria-label="Show part borders"><Icon name="parts" /></ToolButton>
        <ToolButton $w={17} aria-label="Edit active part"><Icon name="layers" /></ToolButton>
        <Picker label="Active part" value="Brass" />
      </Group>
      <Group $w={83}><Picker label="Event colors" value="Velocity" icon="palette" /></Group>
      <Group $w={17}><Tools items={[["midiIn", "MIDI input"]]} /></Group>
      <Group $w={33} $end><Tools items={[["open", "Open in window"], ["setup", "Set up layout"]]} /></Group>
      <Group $w={16}><Tools items={[["gear", "Editor toolbar setup"]]} /></Group>
    </EditorTools>
    <EditorInfo>No Object Selected</EditorInfo>
    <EditorBody>
      <KeyColumn>
        <Keyboard />
        <LaneName>Velocity</LaneName>
      </KeyColumn>
      <CanvasColumn>
        <EditorRuler>
          <GridSvg aria-hidden="true">
            {Array.from({ length: 120 }, (_, i) => (
              <rect key={i} x={Math.floor(i * 21.09)} y="0" width={i % 16 ? 1 : 2} height={i % 16 === 0 ? 17 : i % 4 === 0 ? 7 : 4} fill={i % 4 ? "#8f74e8" : "#c3b6f2"} />
            ))}
            <path d="M1 0h6L1 6z" fill="#fff" />
          </GridSvg>
          {beatLabels.map((l, i) => l && <RulerLabel key={l} $major={l.length === 1} $x={beatX(i) + (l.length === 1 ? 3 : 0)}>{l}</RulerLabel>)}
          <PartName>Brass</PartName>
        </EditorRuler>
        <NoteArea>
          <GridSvg aria-hidden="true">
            <GridLines />
            {blackKeys.map((y) => <rect key={y} y={y} width="100%" height="14" fill="#17191b" opacity="0.3" />)}
            <rect y="52" width="100%" height="1" fill="#3a3d40" />
            <rect y="138" width="100%" height="1" fill="#53575a" />
            <rect y="254" width="100%" height="1" fill="#3a3d40" />
          </GridSvg>
          {notes.map(([n, x, y, w, c], i) => <Note key={i} $x={x} $y={y} $w={w} $c={c}>{n}</Note>)}
          <Marquee />
        </NoteArea>
        <VelocityLane>
          <GridSvg aria-hidden="true">
            <GridLines />
            {velocities.map(([x, h, w, c]) => <rect key={x} x={x} y={77 - h} width={w} height={h} fill={c} />)}
          </GridSvg>
        </VelocityLane>
        <Playhead $x={577} />
        <Cursor width="9" height="13" viewBox="0 0 9 13" aria-hidden="true">
          <path d="M1 1v9l2-2 2 4 2-1-2-4h3z" fill="#fff" stroke="#333" strokeWidth="0.500" />
        </Cursor>
      </CanvasColumn>
      <ScrollColumn $pt={4}>
        <RulerMenu aria-label="Ruler display"><Icon name="down" size={6} /></RulerMenu>
        <VScroll $mt={14} $h={261} $thumbY={100} $thumbH={39} />
        <ZoomMark $mt={11}>-</ZoomMark>
        <VScroll $mt={1} $h={36} $thumbY={32} $thumbH={4} />
        <ZoomMark $mt={4}>+</ZoomMark>
        <VScroll $mt={14} $h={57} />
      </ScrollColumn>
    </EditorBody>
    <EditorFooter>
      <Icon name="diamond" size={9} />
      <i />
      <Icon name="cornerSq" size={9} />
      <HScroll $thumbX={8} $thumbW={21} />
      <i />
      <span>-</span>
      <HScroll $w={30} $thumbX={16} $thumbW={4} />
      <span>+</span>
    </EditorFooter>
  </EditorPanel>
);

const EditorTab = styled(Tab)`
  display: flex;
  align-items: center;
  justify-content: space-between;
  padding: 3px 3px 0 12px;
`;
const PlainButton = styled.button`
  display: flex;
  justify-content: center;
  width: ${(p) => p.$w}px;
`;

/* ---------- meter zone ---------- */

const DigitalScale = styled.div`
  display: grid;
  grid-template-columns: 1fr 1fr;
  height: 12px;
  margin: 13px 3px 4px 0;
  line-height: 12px;
  font-size: 7px;
  font-weight: 700;
  text-align: center;
  background: #050606;
  span + span { font-weight: 400; color: #70757a; }
`;
const MeterButtons = styled.div`
  display: grid;
  grid-template-columns: 1fr 1fr;
  gap: 2px;
  margin: 0 4px 5px 1px;
  button {
    display: flex; align-items: center; justify-content: center;
    height: 11px; border: 1px solid #3a3d3f; border-radius: 2px;
    background: linear-gradient(#a3a7a8, #7e8284); color: #131516;
  }
`;
const Readout = styled.dl`
  display: flex;
  justify-content: center;
  gap: 24px;
  flex: none;
  height: 33px;
  padding-top: 6px;
  border: 1px solid #46494b;
  border-radius: 2px;
  background: #101314;
  font-size: 7px;
  line-height: 12px;
  font-weight: 700;
  text-align: center;
  color: #f0f1f1;
`;
const MeterChart = styled.svg`
  display: block;
  flex: none;
  font-size: 9px;
  font-weight: 700;
  margin-bottom: 9px;
`;

const scale = [[0, 10], [5, 66], [10, 121], [15, 177], [20, 233], [25, 279], [30, 321], [35, 358], [40, 389], [50, 433], [60, 452]];
const minor = [21, 32, 43, 55, 77, 88, 99, 110, 132, 143, 155, 166, 188, 199, 210, 222, 414];

const LevelMeter = () => (
  <MeterChart width="175" height="470" aria-label="Master level meter">
    <defs>
      <linearGradient id="level" x1="0" y1="0" x2="0" y2="1">
        <stop offset="0" stopColor="#38fbc6" /><stop offset="0.220" stopColor="#2bf2e0" /><stop offset="1" stopColor="#22e2fd" />
      </linearGradient>
    </defs>
    <rect x="41" y="9" width="94" height="457" fill="#020303" stroke="#55585a" strokeWidth="2" />
    <rect x="42" y="257" width="45" height="208" fill="url(#level)" />
    <rect x="88" y="248" width="45" height="217" fill="url(#level)" />
    <rect x="42" y="65" width="45" height="1" fill="#4b4e50" />
    <rect x="88" y="70" width="45" height="1" fill="#4b4e50" />
    <rect x="42" y="232" width="45" height="1" fill="#404a80" />
    <rect x="88" y="222" width="45" height="1" fill="#404a80" />
    <rect x="42" y="296" width="45" height="1" fill="#126c66" />
    <rect x="88" y="287" width="45" height="1" fill="#126c66" />
    {scale.slice(5).map(([n, y]) => <rect key={n} x="42" y={y} width="91" height="1" fill="#0b6f7c" opacity="0.4" />)}
    {scale.map(([n, y]) => (
      <g key={n} fill="#bfc2c4">
        <rect x="33" y={y} width="5" height="1" /><rect x="137" y={y} width="5" height="1" />
        <text x="31" y={y + 3} textAnchor="end">{n}</text><text x="143" y={y + 3} textAnchor="start">{n}</text>
      </g>
    ))}
    {minor.map((y) => (
      <g key={y} fill="#a3a6a8"><rect x="36" y={y} width="2" height="1" /><rect x="137" y={y} width="2" height="1" /></g>
    ))}
  </MeterChart>
);

const MeterZone = () => (
  <Column>
    <TabRow>
      <Tab $w={45}>VSTi</Tab><Tab $w={52}>Media</Tab><Tab $w={39}>CR</Tab><Tab $w={52} $active>Meter</Tab>
    </TabRow>
    <PanelBody $radius="4px 0 4px 0" $pad="5px 5px 9px 4px">
      <SectionHeader $mb={0}><Icon name="right" size={8} /><span>Master</span></SectionHeader>
      <DigitalScale><span>Digital Scale</span><span>-18 dBFS</span></DigitalScale>
      <MeterButtons>
        <button aria-label="Meter settings"><Icon name="gear" size={8} /></button>
        <button aria-label="Reset meter"><Icon name="rewind" size={9} /></button>
      </MeterButtons>
      <LevelMeter />
      <Readout>
        <div><dt>RMS Max.</dt><dd>-19.1</dd></div>
        <div><dt>Peak Max.</dt><dd>-4.9</dd></div>
      </Readout>
    </PanelBody>
    <TabRow>
      <Tab $w={53} $active $bottom>Master</Tab><Tab $w={62}>Loudness</Tab>
    </TabRow>
  </Column>
);

/* ---------- transport ---------- */

const TransportBar = styled.footer`
  display: flex;
  align-items: center;
  gap: 3px;
  height: 26px;
  padding: 0 4px;
  background: #24272a;
`;
const Dots = styled.i`
  flex: none;
  width: 1px;
  height: 9px;
  border-left: 1px dotted #b0b3b4;
`;
const QuantizeAuto = styled.button`
  flex: none;
  width: 26px;
  height: 17px;
  border-radius: 2px;
  background: #ee983f;
  color: #2a1a08;
  font-size: 10px;
`;
const Activity = styled.div`
  display: flex;
  flex: none;
  width: 102px;
  height: 20px;
  padding: 2px;
  border: 1px solid #808486;
  border-radius: 3px;
  background: linear-gradient(#1d2021 12px, #050606 12px, #050606 13px, #1d2021 13px);
  i { width: 5px; height: 10px; background: #47a377; }
`;
const TransportButtons = styled(Group)`
  height: 20px;
  border-color: #b9bcbd;
  border-radius: 3px;
`;
const Levels = styled.div`
  display: flex;
  align-items: flex-end;
  justify-content: flex-end;
  gap: 1px;
  flex: none;
  width: 52px;
  height: 20px;
  padding: 0 7px 2px;
  background: #050606;
  i { width: 5px; height: 9px; background: #3fd2b4; }
`;
const TaskStrip = styled.div`
  height: 2px;
  background: linear-gradient(90deg, #17191b 32px, #f0f0f0 32px, #f0f0f0 261px, #17191b 261px, #17191b 491px, #4a4c4e 491px, #4a4c4e 522px, #17191b 522px);
`;

const ModePicker = ({ icon, label }) => (
  <Group $w={30} $dark>
    <ToolButton $field aria-label={label}><Icon name={icon} /></ToolButton>
    <ToolButton $field $w={12} aria-label={label + " options"}><Icon name="down" size={8} /></ToolButton>
  </Group>
);

const Transport = () => (
  <TransportBar>
    <Group $w={17}><Tools items={[["clock", "Constrain delay compensation"]]} /></Group>
    <ModePicker icon="dot" label="Record mode" /><Dots />
    <ModePicker icon="audio" label="Audio record mode" /><Dots />
    <ModePicker icon="midi" label="MIDI record mode" /><Dots />
    <QuantizeAuto>AQ</QuantizeAuto>
    <Spacer $grow={136} />
    <Activity><i /></Activity>
    <Group $w={101} $ml={6}>
      <ToolButton $w={17} aria-label="Go to left locator"><Icon name="flagL" size={11} /></ToolButton>
      <PositionInput aria-label="Left locator" defaultValue="2.  1.  1.   0" />
    </Group>
    <Group $w={100}>
      <ToolButton $w={17} aria-label="Go to right locator"><Icon name="flagR" size={11} /></ToolButton>
      <PositionInput aria-label="Right locator" defaultValue="6.  1.  1.   0" />
    </Group>
    <Group $w={51}><Tools items={[["lock", "Lock punch points", 1], ["punchIn", "Punch in"], ["punchOut", "Punch out"]]} /></Group>
    <Dots />
    <TransportButtons $w={134}>
      <ToolButton $fill="#8463dc" aria-label="Cycle"><Icon name="cycle" size={13} /></ToolButton>
      <ToolButton $on aria-label="Stop"><Icon name="stop" size={12} /></ToolButton>
      <ToolButton $fill="#45494b" aria-label="Play"><Icon name="play" size={13} /></ToolButton>
      <ToolButton $fill="#45494b" aria-label="Record"><Icon name="ring" size={12} /></ToolButton>
    </TransportButtons>
    <Dots />
    <Group $w={25}><Tools items={[["moon", "Insert retrospective recording"]]} /></Group>
    <Group $w={100}>
      <ToolButton $w={17} aria-label="Time format"><Icon name="note" /></ToolButton>
      <PositionInput aria-label="Song position" defaultValue="3.  3.  4.  57" />
    </Group>
    <Dots />
    <Group $w={72}>
      <ToolButton $w={17} $on aria-label="Tempo track"><Icon name="tempo" size={12} /></ToolButton>
      <TempoInput aria-label="Tempo" defaultValue="120.000" />
      <ToolButton $w={12} $field aria-label="Change tempo"><Icon name="updown" size={11} /></ToolButton>
    </Group>
    <Dots />
    <Spacer $grow={133} />
    <Group $w={34}><Tools items={[["metronome", "Metronome", 1], ["edit", "Metronome setup"]]} /></Group>
    <Dots />
    <Levels><i /><i /><b /><i /><i /></Levels>
    <Dots />
    <Group $w={17}><Tools items={[["gear", "Transport setup"]]} /></Group>
  </TransportBar>
);

/* ---------- page ---------- */

const Page = styled.div`
  display: grid;
  grid-template-columns: minmax(0, 1fr);
  grid-template-rows: auto auto auto 1fr auto auto;
  min-height: 100vh;
  overflow: hidden;
`;

export default function App() {
  return (
    <Page>
      <GlobalStyle />
      <MenuBar>
        <Icon name="logo" size={11} />
        <MenuList>{menus.map((m) => <MenuItem key={m}>{m}</MenuItem>)}</MenuList>
        <WindowTitle>Cubase Pro Project - Tut 1 Reggae</WindowTitle>
        <WindowControls>
          <button aria-label="Minimize"><Icon name="minimize" size={8} /></button>
          <button aria-label="Restore"><Icon name="restore" size={8} /></button>
          <button aria-label="Close"><Icon name="close" size={8} /></button>
        </WindowControls>
      </MenuBar>
      <Toolbar>
        <Group $w={83}><Tools items={[["constrain", "Delay compensation"], ["tree", "History"], ["faders", "MixConsole"], ["span", "Racks"], ["skip", "Activate project"]]} /></Group>
        <Group $w={100}>
          {["M", "S", "L", "R", "W", "A"].map((l) => <ToolButton key={l} $dim={l === "L"}>{l}</ToolButton>)}
        </Group>
        <Group $w={101}>
          <ToolButton $w={16} $on aria-label="Automation follows"><Icon name="touch" /></ToolButton>
          <Picker label="Automation mode" value="Touch" />
          <ToolButton $w={17} aria-label="Automation panel"><Icon name="edit" size={11} /></ToolButton>
        </Group>
        <Group $w={34}>
          <ToolButton $on aria-label="Auto scroll"><Icon name="autoscroll" /></ToolButton>
          <ToolButton $field aria-label="Auto scroll options"><Icon name="down" size={8} /></ToolButton>
        </Group>
        <Group $w={101}>
          <ToolButton $w={16} aria-label="Left locator"><Icon name="flagL" size={11} /></ToolButton>
          <PositionInput aria-label="Left locator position" defaultValue="2.  1.  1.   0" />
        </Group>
        <Group $w={100}>
          <ToolButton $w={16} aria-label="Right locator"><Icon name="flagR" size={11} /></ToolButton>
          <PositionInput aria-label="Right locator position" defaultValue="6.  1.  1.   0" />
        </Group>
        <Group $w={226}>
          <ToolButton $w={8} aria-label="Tool options">=</ToolButton>
          <Tools items={[["pointer", "Object selection", 1], ["range", "Range selection"], ["pencil", "Draw"], ["eraser", "Erase"], ["scissors", "Split"], ["glue", "Glue"], ["cross", "Mute"], ["zoom", "Zoom"], ["hand", "Comp"], ["comp", "Time warp"], ["line", "Line"], ["speaker", "Play"], ["bucket", "Color"]]} />
        </Group>
        <Group $w={29} $dark>
          <ToolButton $field aria-label="Colorize"><Icon name="palette" size={11} /></ToolButton>
          <ToolButton $field $w={12} aria-label="Color menu"><Icon name="down" size={8} /></ToolButton>
        </Group>
        <Group $w={18}><Tools items={[["xfade", "Snap to zero crossing"]]} /></Group>
        <Group $w={92}>
          <ToolButton $w={16} $on aria-label="Snap"><Icon name="snap" /></ToolButton>
          <Picker label="Snap type" value="Grid" />
        </Group>
        <Group $w={93}><Picker label="Grid type" value="Beat" icon="hash" /></Group>
        <Group $w={150}>
          <ToolButton $w={17} $fs={9} aria-label="Apply quantize">Q</ToolButton>
          <Picker label="Quantize preset" value="1/32" />
          <ToolButton $w={17} aria-label="Iterative quantize"><Icon name="iterate" /></ToolButton>
          <ToolButton $w={17} aria-label="Quantize soft"><Icon name="quantPanel" /></ToolButton>
          <ToolButton $w={17} aria-label="Open quantize panel"><Icon name="edit" size={11} /></ToolButton>
        </Group>
        <Group $w={82}>
          <ToolButton $w={13} aria-label="Aligned zones"><Icon name="align" size={11} /></ToolButton>
          <Tools items={[["zoneLeft", "Left zone", 1], ["zoneBottom", "Lower zone", 1], ["zoneRight", "Right zone", 1], ["setup", "Set up window layout"]]} />
        </Group>
        <Group $w={17} $end><Tools items={[["gear", "Toolbar setup"]]} /></Group>
      </Toolbar>
      <InfoLine>
        {infoCells.map(([l, v, w, r]) => (
          <InfoCell key={l} $w={w}><InfoLabel>{l}</InfoLabel><InfoValue $right={r}>{v}</InfoValue></InfoCell>
        ))}
        <InfoCell $w={1} />
        <InfoSetup aria-label="Info line setup"><Icon name="gear" size={9} /></InfoSetup>
      </InfoLine>
      <Workspace>
        <Inspector />
        <Column>
          <Project />
          <KeyEditor />
          <TabRow>
            <PlainButton $w={12} aria-label="Close lower zone"><Icon name="cross" size={9} /></PlainButton>
            <Tab $w={72}>MixConsole</Tab>
            <EditorTab $w={64} $active $bottom $bright>Editor<Icon name="down" size={7} /></EditorTab>
            <Tab $w={86}>Sampler Control</Tab>
            <Tab $w={71}>Chord Pads</Tab>
            <PlainButton $w={12} aria-label="Lower zone setup"><Icon name="gear" size={9} /></PlainButton>
          </TabRow>
        </Column>
        <MeterZone />
      </Workspace>
      <Transport />
      <TaskStrip />
    </Page>
  );
}
